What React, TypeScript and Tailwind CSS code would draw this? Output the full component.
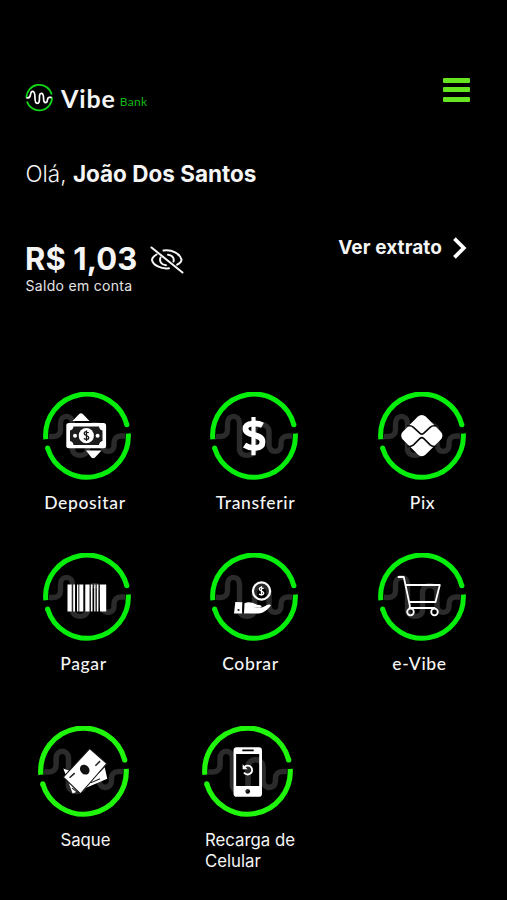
import type { ReactNode } from 'react';

function Ring({ size, color, children }: { size: number; color: string; children: ReactNode }) {
  return (
    <svg width={size} height={size} viewBox="0 0 88 88" fill="none" className="block shrink-0">
      <path
        d="M6 44.500h4.500c4.500 0 7-2.500 7-7V31.500c0-9.500 12-9.500 12 0V57c0 8.500 15 8.500 15 0V40c0-10 14.500-10 14.500 0V52.500c0 9 12 9 12 1V51c0-4.500 2.500-7 7-7h4"
        stroke="#2b2b2b"
        strokeWidth="5.400"
      />
      <path d="M2.800 47.200A41.300 41.300 0 0 1 83.900 33" stroke={color} strokeWidth="5" />
      <circle cx="83.900" cy="32.800" r="2.500" fill={color} />
      <path d="M85.300 41.500A41.300 41.300 0 0 1 4.500 55.800" stroke={color} strokeWidth="5" />
      <circle cx="4.600" cy="56" r="2.500" fill={color} />
      {children}
    </svg>
  );
}

function Deposit() {
  return (
    <g>
      <path d="M29.500 29l6.700-7q1.800-1.600 3.600 0l6.700 7z" fill="#fff" />
      <path d="M43 58.500h15.500l-6.500 7q-1.800 1.600-3.600 0z" fill="#fff" />
      <rect x="23.300" y="31" width="39.800" height="25.300" rx="2.500" fill="#fff" />
      <path d="M30.500 34.500h25.500q.5 3.500 3.500 4v10.500q-3 .5-3.500 4H30.500q-.5-3.500-3.500-4V38.500q3-.5 3.500-4z" fill="#1c1c1c" />
      <circle cx="43.300" cy="43.700" r="7.600" fill="#fff" />
      <circle cx="32" cy="43.700" r="2" fill="#fff" />
      <circle cx="54.600" cy="43.700" r="2" fill="#fff" />
      <path d="M45.700 40.700q-4.500-2-4.500.8c0 2.300 4.600 1.700 4.600 4.200 0 2.400-3.400 2-5 .8M43.500 38.500v10.500" stroke="#111" strokeWidth="1.300" />
    </g>
  );
}

function Dollar() {
  return (
    <g stroke="#fff">
      <path d="M52.500 33.200C48.500 31 35.500 30 35.500 36.700c0 8 17 4.200 17 13.200 0 7.800-12 7-18 3.200" strokeWidth="5.800" />
      <path d="M43.500 25V63.300" strokeWidth="4.200" />
    </g>
  );
}

function Pix() {
  return (
    <g>
      <rect x="27.600" y="27.400" width="32.400" height="32.400" rx="5.500" transform="rotate(45 43.800 43.600)" fill="#fff" />
      <path
        d="M29 33.700h2.500q2.300 0 4 1.600l6.500 6q1.800 1.600 3.600 0l6.500-6q1.700-1.600 4-1.600h2.500M29 54.500h2.500q2.300 0 4-1.600l6.500-6.500q1.800-1.600 3.600 0l6.500 6.500q1.700 1.600 4 1.600h2.500"
        stroke="#090909"
        strokeWidth="1.600"
      />
    </g>
  );
}

function Barcode() {
  return (
    <path
      d="M24.500 31.500h4.200v27h-4.200zM30.200 31.500h1.800v27h-1.800zM34 31.500h1.400v27h-1.400zM36.300 31.500h4v27h-4zM42.300 31.500h4.200v27h-4.200zM47.900 31.500h1.600v27h-1.600zM51.200 31.500h1.300v27h-1.300zM53.800 31.500h1.600v27h-1.600zM57 31.500h6.200v27h-6.200z"
      fill="#fff"
    />
  );
}

function CoinHand() {
  return (
    <g>
      <circle cx="51.500" cy="38" r="8.600" stroke="#fff" strokeWidth="2.200" />
      <path d="M53.700 35.500q-4.400-2-4.400.6c0 2.400 4.500 1.600 4.500 4 0 2.300-3.400 2-4.800.8M51.500 33.300v9.500" stroke="#fff" strokeWidth="1.300" />
      <path d="M25.300 49l7 .3-.4 11.200H24z" fill="#fff" />
      <circle cx="28.500" cy="57" r="1.100" fill="#111" />
      <path d="M34.500 50.200c5-2 8.500 0 12.500 1.500 3.200.5 4.800.5 4.500 2-.3 1.300-4.500 1.200-7.500.8 5.500 1.700 10-.5 13-2.500 2-1.300 4.700-.4 3.300 1.300C57.500 57 53.500 60 48.500 60.500H34z" fill="#fff" />
    </g>
  );
}

function Cart() {
  return (
    <g stroke="#fff" strokeWidth="1.800" strokeLinecap="round" strokeLinejoin="round">
      <path d="M20.500 24h5.300l6 28.500V55M27.800 32h34l-4.300 17H31.300M31.500 55h25" />
      <circle cx="32.500" cy="59" r="3.300" />
      <circle cx="56.500" cy="59" r="3.300" />
    </g>
  );
}

function Notes() {
  return (
    <g>
      <path d="M24.500 41l5 2 30 2 5-5 2.500 11-33.500 14.200z" fill="#fff" />
      <path d="M51 55l9-4M33 60l5 4" stroke="#111" strokeWidth="1" />
      <path d="M24.500 49.500L50 21.800l16.500 14.500L41 65.500z" fill="#fff" stroke="#111" strokeWidth="1" />
      <ellipse cx="45.200" cy="42.200" rx="5.200" ry="4.200" transform="rotate(50 45.200 42.200)" fill="#111" />
      <path d="M30.500 50l5-4.500M55.500 38.500l4.500-4.500" stroke="#222" strokeWidth="1.500" />
    </g>
  );
}

function Phone() {
  return (
    <g>
      <path fillRule="evenodd" d="M33.500 20.500H55q3 0 3 3v42q0 3-3 3H33.500q-3 0-3-3v-42q0-3 3-3zM33 27v31h22.300V27zM39 22.800v1.700h11v-1.700zM44.200 60.900a2.300 2.300 0 1 0 .01 0z" fill="#fff" />
      <path d="M41.200 39.500A4.300 4.300 0 1 1 40.600 45" stroke="#fff" strokeWidth="1.800" />
      <path d="M39.300 37v4.800h4.800z" fill="#fff" />
    </g>
  );
}

const rounded = "font-['Lato','Liberation_Sans',sans-serif] text-[17.500px] font-medium leading-[22px] tracking-[0.650px]";

function Tile({ label, className, children }: { label: string; className: string; children: ReactNode }) {
  return (
    <div className="flex w-[88px] flex-col items-center">
      <Ring size={88} color="#06ee0c">{children}</Ring>
      <span className={`mt-[12px] whitespace-nowrap ${rounded} ${className}`}>{label}</span>
    </div>
  );
}

export default function App() {
  return (
    <main className="h-[900px] w-[507px] overflow-hidden bg-black font-['Inter','Liberation_Sans',sans-serif] text-[#f5f5f5]">
      <header className="flex h-[160px] items-start justify-between pl-[25px] pr-[37px] pt-[77.500px]">
        <div className="flex items-center pt-[5px]">
          <svg width="29" height="30" viewBox="0 0 29 30" fill="none">
            <path d="M1.500 15.200A12.800 12.800 0 0 1 26.700 11.500M27 14.200A12.800 12.800 0 0 1 2 18.500" stroke="#12d918" strokeWidth="1.700" />
            <path d="M1.500 14.800h1.500c4 0 1.200-6.500 4.600-6.500 4.600 0 .2 12 4.600 12s.2-10 4.200-10c4 0 .4 9.300 4 9.300 3.200 0 1-5.300 3.800-5.300h2.500" stroke="#fff" strokeWidth="1.700" />
          </svg>
          <span className="ml-[7px] font-['Lato','Liberation_Sans',sans-serif] text-[25px] font-bold leading-[30px] tracking-[0.900px]">Vibe</span>
          <span className="ml-[4px] mt-[9px] font-['Lato','Liberation_Sans',sans-serif] text-[12px] leading-[14px] tracking-[0.300px] text-[#12b817]">Bank</span>
        </div>
        <button aria-label="Menu" className="flex w-[27px] flex-col gap-[4.500px]">
          <span className="h-[5px] w-full rounded-[1px] bg-[#65e620]" />
          <span className="h-[5px] w-full rounded-[1px] bg-[#65e620]" />
          <span className="h-[5px] w-full rounded-[1px] bg-[#65e620]" />
        </button>
      </header>

      <h1 className="h-[76px] pl-[25.500px] text-[22.500px] font-light leading-[27px] whitespace-nowrap">
        Olá, <strong className="font-bold">João Dos Santos</strong>
      </h1>

      <section className="flex h-[156px] items-start justify-between pl-[25px] pr-[40px]">
        <div className="pt-[4px]">
          <div className="flex items-center">
            <span className="text-[31px] font-bold leading-[37px] tracking-[0.100px] whitespace-nowrap">R$ 1,03</span>
            <svg width="34" height="28" viewBox="0 0 34 28" fill="none" stroke="#f5f5f5" strokeWidth="2" strokeLinecap="round" className="ml-[13px] mt-[3px]">
              <path d="M1.500 1.500L32.500 26.500" />
              <path d="M6.500 8.500Q2 11.500 2 14c1 5 9 9.500 17 8.300M13.500 4.600C22 3.200 30 8 31.500 13.500c0 2-2 4-4.300 5.200" />
              <path d="M10.500 11.500c-1.500 4 1 7.500 5.500 7.800M18 8.800c4 .3 6.500 3.200 5.500 6.700" />
            </svg>
          </div>
          <p className="pl-[0.500px] text-[14px] leading-[17px] tracking-[0.300px] text-[#e5e5e5] whitespace-nowrap">Saldo em conta</p>
        </div>
        <div className="flex items-center">
          <span className="text-[19px] font-bold leading-[23px] tracking-[0.100px] whitespace-nowrap">Ver extrato</span>
          <svg width="14" height="22" viewBox="0 0 14 22" fill="none" className="ml-[11px]">
            <path d="M2.800 3L10.800 11l-8 8" stroke="#fff" strokeWidth="3.800" strokeLinecap="square" />
          </svg>
        </div>
      </section>

      <nav>
        <div className="flex h-[161px] gap-[79.500px] pl-[42.500px]">
          <Tile label="Depositar" className="-ml-[3px]"><Deposit /></Tile>
          <Tile label="Transferir" className="ml-[3px]"><Dollar /></Tile>
          <Tile label="Pix" className="ml-[2px]"><Pix /></Tile>
        </div>
        <div className="flex h-[173px] gap-[79.500px] pl-[42.500px]">
          <Tile label="Pagar" className="-ml-[6px]"><Barcode /></Tile>
          <Tile label="Cobrar" className="-ml-[7px]"><CoinHand /></Tile>
          <Tile label="e-Vibe" className="-ml-[4px]"><Cart /></Tile>
        </div>
        <div className="flex gap-[73px] pl-[38px]">
          <div className="flex w-[91px] flex-col items-center">
            <Ring size={91} color="#1ff60b"><Notes /></Ring>
            <span className="ml-[4px] mt-[13px] text-[16.800px] leading-[21px]">Saque</span>
          </div>
          <div className="flex w-[100px] flex-col">
            <Ring size={91} color="#1ff60b"><Phone /></Ring>
            <span className="ml-[3px] mt-[13px] text-[16.800px] leading-[21px] whitespace-nowrap">Recarga de<br />Celular</span>
          </div>
        </div>
      </nav>
    </main>
  );
}
